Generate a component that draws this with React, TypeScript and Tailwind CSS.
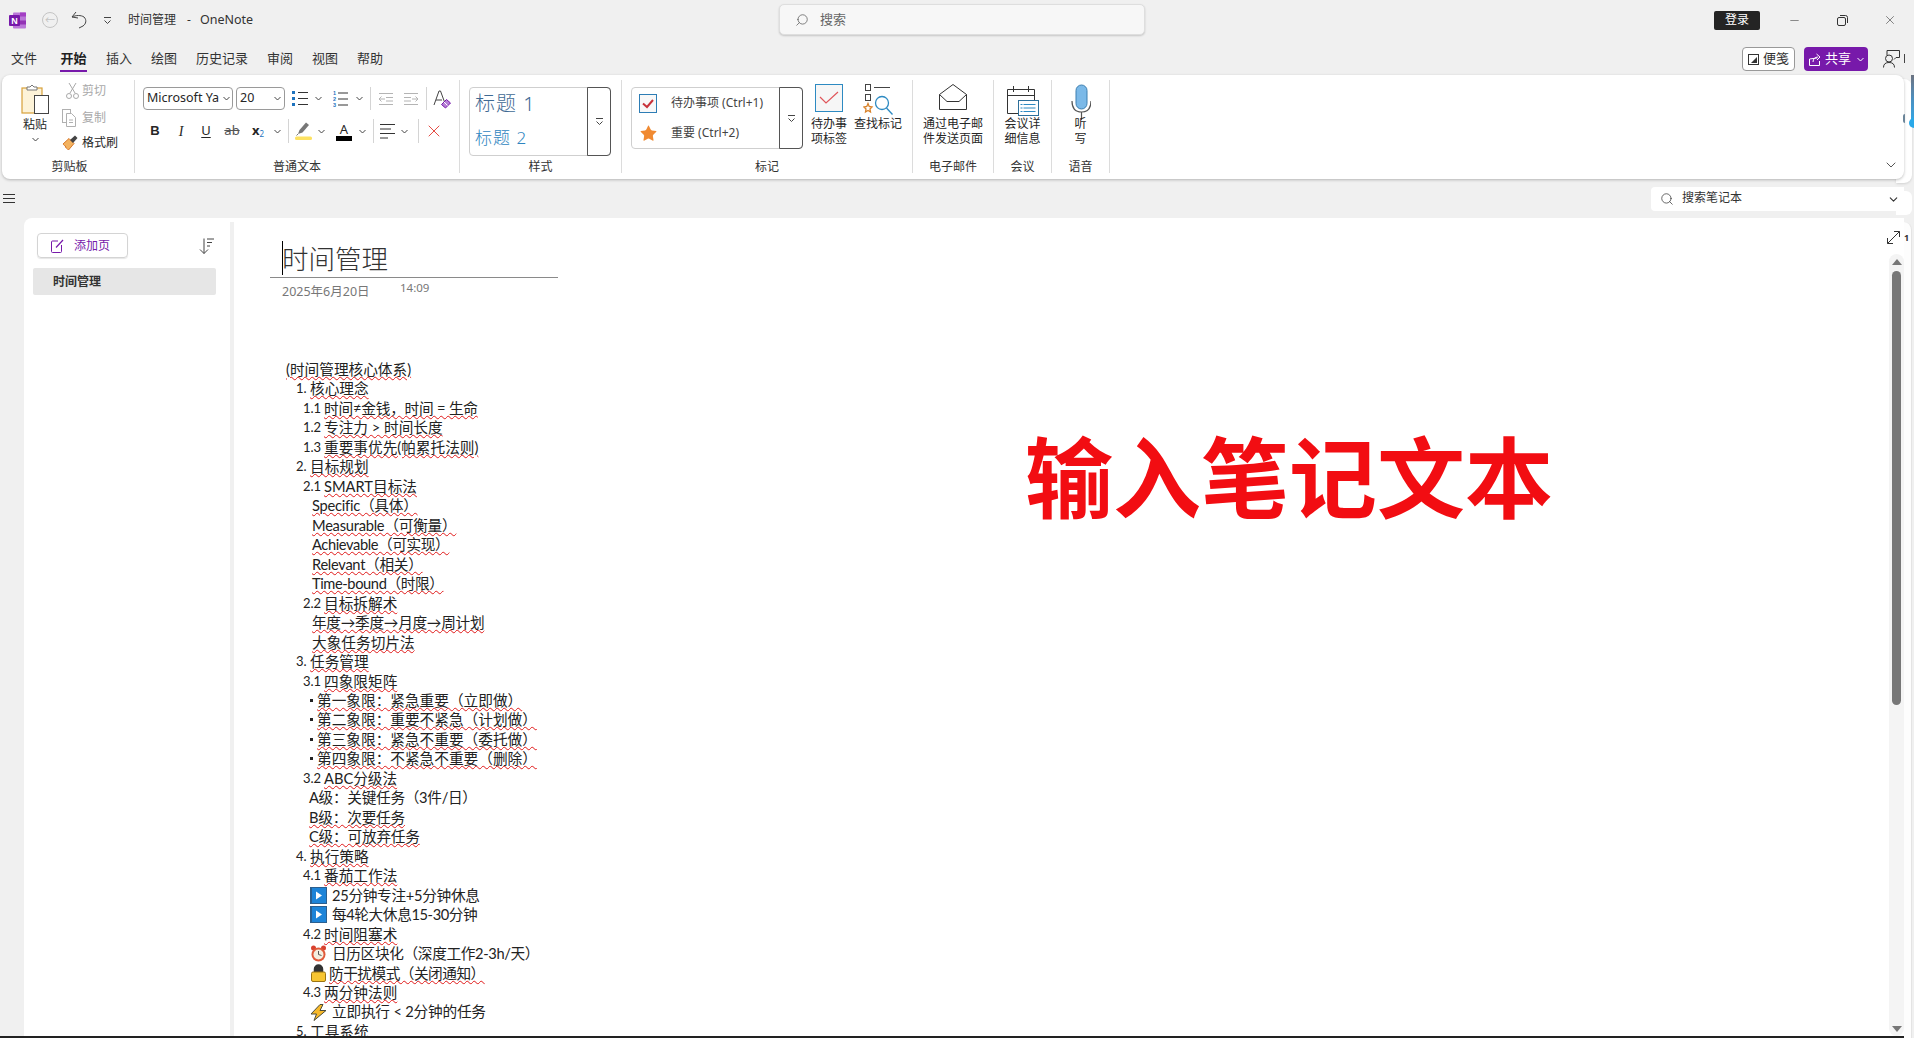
import { ChevronDown, Search, Star, X, Minus } from "lucide-react";

const Chev = ({ className = "" }: { className?: string }) => (
  <svg width="7" height="5" viewBox="0 0 7 5" className={className}>
    <path d="M.5 1 3.5 4 6.5 1" fill="none" stroke="#444" strokeWidth="1" />
  </svg>
);

const MoreDrop = () => (
  <svg width="9" height="9" viewBox="0 0 9 9">
    <path d="M1 1.5h7" stroke="#444" />
    <path d="M1.5 4.5 4.5 7.5 7.5 4.5" fill="none" stroke="#444" />
  </svg>
);

const Sep = ({ className = "" }: { className?: string }) => <div className={`w-px bg-[#d4d4d4] ${className}`} />;

function OneNoteLogo() {
  return (
    <svg width="17" height="17" viewBox="0 0 17 17">
      <rect x="4" y="0.5" width="13" height="16" rx="1" fill="#ba77d8" />
      <rect x="11" y="0.5" width="6" height="4" fill="#a33fc4" />
      <rect x="11" y="8.5" width="6" height="4" fill="#9333b5" />
      <rect x="0" y="3" width="11" height="11" rx="1" fill="#7719aa" />
      <text x="5.5" y="12" textAnchor="middle" fontSize="9" fontWeight="700" fill="#fff" fontFamily="Liberation Sans">
        N
      </text>
    </svg>
  );
}

function PasteIcon() {
  return (
    <svg width="28" height="30" viewBox="0 0 28 30">
      <rect x="1" y="4" width="20" height="25" fill="#fdf3d8" stroke="#d8a13a" strokeWidth="1.2" />
      <path d="M6 6V3h3l2-2 2 2h3v3z" fill="#fff" stroke="#777" />
      <rect x="13.5" y="11.5" width="14" height="18" fill="#fff" stroke="#444" />
    </svg>
  );
}

function ScissorsIcon() {
  return (
    <svg width="13" height="18" viewBox="0 0 13 18" fill="none" stroke="#a9a9a9">
      <path d="M3 1 9 11M10 1 4 11" />
      <circle cx="3" cy="14" r="2.5" />
      <circle cx="10" cy="14" r="2.5" />
    </svg>
  );
}

function CopyIcon() {
  return (
    <svg width="14" height="18" viewBox="0 0 14 18" fill="#fff" stroke="#b0b0b0">
      <rect x=".5" y=".5" width="8" height="13" />
      <path d="M4.5 4.5h5l4 4v9h-9z" />
      <path d="M7 11h4M7 13.5h4" />
    </svg>
  );
}

function BrushIcon() {
  return (
    <svg width="16" height="16" viewBox="0 0 16 16">
      <path d="M1 9 7 3.5l5 5L6.5 15C5 13 3 13 3.5 11 2.500 11 2 10 1 9z" fill="#f3b25f" stroke="#d8782a" />
      <path d="m8 5 5-4.500 2.500 2.500L11 8z" fill="#444" />
    </svg>
  );
}

function BulletsIcon() {
  return (
    <svg width="16" height="17" viewBox="0 0 16 17">
      <rect x="0" y="1" width="3" height="3" fill="#1e73be" />
      <rect x="0" y="7" width="3" height="3" fill="#1e73be" />
      <rect x="0" y="13" width="3" height="3" fill="#1e73be" />
      <path d="M6 2.500h10M6 8.500h10M6 14.500h10" stroke="#333" />
    </svg>
  );
}

function NumberedIcon() {
  return (
    <svg width="15" height="18" viewBox="0 0 15 18">
      <text x="0" y="5" fontSize="5.500" fontWeight="700" fill="#1e73be" fontFamily="Liberation Sans">1</text>
      <text x="0" y="11" fontSize="5.500" fontWeight="700" fill="#1e73be" fontFamily="Liberation Sans">2</text>
      <text x="0" y="17" fontSize="5.500" fontWeight="700" fill="#1e73be" fontFamily="Liberation Sans">3</text>
      <path d="M5 3h10M5 9h10M5 15h10" stroke="#333" />
    </svg>
  );
}

function IndentIcon({ flip }: { flip?: boolean }) {
  return (
    <svg width="15" height="14" viewBox="0 0 15 14" fill="none" stroke="#b4b4b4" className={flip ? "-scale-x-100" : ""}>
      <path d="M1 1.500h14M8 5.500h7M8 9h7M1 12.500h14" />
      <path d="M7 7H1M3.500 4.500 1 7l2.500 2.500" />
    </svg>
  );
}

function ClearFormatIcon() {
  return (
    <svg width="18" height="20" viewBox="0 0 18 20">
      <path d="M1 16 6 2h1.500l4 11" fill="none" stroke="#444" />
      <path d="M3 11h6" stroke="#444" />
      <path d="m8.500 15.500 5-5 4 3.500-5 5z" fill="#b67fd6" stroke="#7719aa" />
      <path d="m11 13 3.500 3.500" stroke="#fff" />
    </svg>
  );
}

function HighlightIcon() {
  return (
    <svg width="17" height="20" viewBox="0 0 17 20">
      <path d="m3 13 1.500-4L11 1.500 14 4l-6.500 7.500z" fill="#777" />
      <path d="M3 13 1.500 14.500" stroke="#777" />
      <rect x="0" y="15.500" width="17" height="3.500" rx="1.500" fill="#fde262" />
    </svg>
  );
}

function AlignIcon() {
  return (
    <svg width="15" height="16" viewBox="0 0 15 16" stroke="#333">
      <path d="M0 1.500h15M0 6h11M0 10.500h15M0 15h8" />
    </svg>
  );
}

function CheckboxIcon() {
  return (
    <svg width="18" height="19" viewBox="0 0 18 19">
      <rect x=".5" y=".5" width="17" height="18" fill="#f8f8f8" stroke="#2d7db5" />
      <path d="M4 9.500 8 13l6-7" fill="none" stroke="#c8323a" strokeWidth="2" />
    </svg>
  );
}

function TodoTagIcon() {
  return (
    <svg width="28" height="28" viewBox="0 0 28 28">
      <rect x=".5" y=".5" width="27" height="27" fill="#f6f6f6" stroke="#2d8ac2" />
      <path d="m5 13 6 6L23 8" fill="none" stroke="#e0555a" strokeWidth="1.200" />
    </svg>
  );
}

function FindTagIcon() {
  return (
    <svg width="30" height="31" viewBox="0 0 30 31">
      <rect x="2.500" y=".5" width="5" height="6" fill="#fff" stroke="#444" />
      <path d="M11 3.500h16" stroke="#444" />
      <rect x="2.500" y="10.500" width="5" height="6" fill="#fff" stroke="#444" />
      <path d="M5 19.500 6.200 22.500 9 23 7 25l.5 3L5 26.500 2.500 28 3 25l-2-2 2.800-.5z" fill="none" stroke="#d8822a" strokeWidth="1.300" />
      <circle cx="19" cy="19" r="6.500" fill="none" stroke="#2d8ac2" strokeWidth="1.300" />
      <path d="m23.500 24 6 6.500" stroke="#2d8ac2" strokeWidth="1.300" />
    </svg>
  );
}

function MailIcon() {
  return (
    <svg width="28" height="26" viewBox="0 0 28 26" fill="none" stroke="#333">
      <path d="M.5 10.500 14 .5l13.500 10v15H.5z" fill="#fff" />
      <path d="M.5 10.500 8 17.500h12l7.500-7" />
      <path d="M8 17.500h12" />
    </svg>
  );
}

function MeetingIcon() {
  return (
    <svg width="32" height="32" viewBox="0 0 32 32" fill="none">
      <path d="M.5 5.500h27M.5 11.500h27M.5 5.500v24h11M27.500 5.500v11M6.500 2v6M21.500 2v6" stroke="#333" />
      <rect x="11.500" y="16.500" width="20" height="15" fill="#fff" stroke="#2d6f9a" />
      <path d="M16.500 20.500h12M16.500 24h12M16.500 27.500h12" stroke="#2d8ac2" />
      <path d="M13.500 20.500h2M13.500 24h2M13.500 27.500h2" stroke="#2d8ac2" />
    </svg>
  );
}

function MicIcon() {
  return (
    <svg width="20" height="36" viewBox="0 0 20 36" fill="none">
      <rect x="5" y="1" width="11" height="24" rx="5.500" fill="#7bb9e8" stroke="#3d7fb0" />
      <path d="M1 17c0 7 3 11 9.500 11S20 24 20 17M10.500 28v8" stroke="#555" strokeWidth="1.200" />
    </svg>
  );
}

function NoteIcon() {
  return (
    <svg width="11" height="11" viewBox="0 0 11 11">
      <rect x=".5" y=".5" width="10" height="10" fill="#fff" stroke="#333" />
      <path d="M3 9l6-6v6z" fill="#333" />
    </svg>
  );
}

function ShareIcon() {
  return (
    <svg width="12" height="13" viewBox="0 0 12 13" fill="none" stroke="#fff">
      <path d="M8 5 .5 6v6.500h10V8" />
      <path d="M4 9c0-3 2-5 5-5M7.500 1 11 4 8 7" />
    </svg>
  );
}

function CommentIcon() {
  return (
    <svg width="17" height="18" viewBox="0 0 17 18" fill="none" stroke="#333">
      <circle cx="6" cy="8.500" r="3.500" />
      <path d="M.5 17.500c0-3.500 2-5 5.500-5s5.500 1.500 5.500 5M4 5V.5h12.500v7H13l-2 2" />
    </svg>
  );
}

function AddPageIcon() {
  return (
    <svg width="13" height="14" viewBox="0 0 13 14" fill="none" stroke="#7719aa">
      <path d="M7 2H1.500A1 1 0 0 0 .5 3v9.500a1 1 0 0 0 1 1h8a1 1 0 0 0 1-1V6" />
      <path d="M5 8.500 12 1" strokeWidth="1.200" />
    </svg>
  );
}

function SortIcon() {
  return (
    <svg width="15" height="16" viewBox="0 0 15 16" fill="none" stroke="#444">
      <path d="M5 .5v15M1 11.500l4 4 4-4M8 1h7M8 4.500h5M8 8h3" />
    </svg>
  );
}

function ExpandIcon() {
  return (
    <svg width="13" height="13" viewBox="0 0 13 13" fill="none" stroke="#333">
      <path d="M.5 12.500 12.500 .5M7 .5h5.500V6M.5 7v5.500H6" />
    </svg>
  );
}

function PlayIcon() {
  return (
    <svg width="17" height="17" viewBox="0 0 17 17">
      <rect width="17" height="17" fill="#2b5f8f" />
      <rect x="2" y="1" width="14" height="15" fill="#1d84d8" />
      <path d="M6 4.500 12 8.500 6 12.500z" fill="#fff" />
    </svg>
  );
}

function ClockIcon() {
  return (
    <svg width="17" height="17" viewBox="0 0 17 17">
      <circle cx="3.500" cy="3" r="2.500" fill="#d8412f" />
      <circle cx="13.500" cy="3" r="2.500" fill="#d8412f" />
      <circle cx="8.500" cy="9.500" r="7" fill="#e05a3a" />
      <circle cx="8.500" cy="9.500" r="5" fill="#f4eedf" />
      <path d="M8.500 6v3.500l3 1" fill="none" stroke="#555" />
    </svg>
  );
}

function LockIcon() {
  return (
    <svg width="15" height="18" viewBox="0 0 15 18">
      <path d="M3.500 8V5a4 4 0 0 1 8 0v3" fill="#333" stroke="#333" strokeWidth="1.500" />
      <rect x=".5" y="8" width="14" height="9.500" rx="1.500" fill="#f7c531" stroke="#9a7414" />
    </svg>
  );
}

function BoltIcon() {
  return (
    <svg width="17" height="17" viewBox="0 0 17 17">
      <path d="M10 .5 1 10h5.500L4 16.500 16 6.500h-6L13 .5z" fill="#f7b92a" stroke="#4b4b3a" />
    </svg>
  );
}

const Wavy = ({ children }: { children: string }) => (
  <span className="underline decoration-wavy decoration-[#e01818] decoration-1 underline-offset-[1px]">{children}</span>
);

type Line = { pad: string; pre?: string; text?: string; plain?: string; icon?: React.ReactNode; tight?: boolean; dot?: boolean };

const lines: Line[] = [
  { pad: "pl-[3px]", text: "(时间管理核心体系)" },
  { pad: "pl-[13px]", pre: "1. ", text: "核心理念" },
  { pad: "pl-[20px] tracking-[-0.2px]", pre: "1.1 ", text: "时间≠金钱，时间 = 生命" },
  { pad: "pl-[20px]", pre: "1.2 ", text: "专注力 > 时间长度" },
  { pad: "pl-[20px]", pre: "1.3 ", text: "重要事优先(帕累托法则)" },
  { pad: "pl-[13px]", pre: "2. ", text: "目标规划" },
  { pad: "pl-[20px]", pre: "2.1 ", text: "SMART目标法" },
  { pad: "pl-[29px] tracking-[-0.25px]", text: "Specific（具体）" },
  { pad: "pl-[29px] tracking-[-0.25px]", text: "Measurable（可衡量）" },
  { pad: "pl-[29px] tracking-[-0.4px]", text: "Achievable（可实现）" },
  { pad: "pl-[29px] tracking-[-0.3px]", text: "Relevant（相关）" },
  { pad: "pl-[29px] tracking-[-0.4px]", text: "Time-bound（时限）" },
  { pad: "pl-[20px]", pre: "2.2 ", text: "目标拆解术" },
  { pad: "pl-[29px] tracking-[-0.3px]", text: "年度→季度→月度→周计划" },
  { pad: "pl-[29px]", text: "大象任务切片法" },
  { pad: "pl-[13px]", pre: "3. ", text: "任务管理" },
  { pad: "pl-[20px]", pre: "3.1 ", text: "四象限矩阵" },
  { pad: "pl-[26px]", dot: true, text: "第一象限：紧急重要（立即做）" },
  { pad: "pl-[26px]", dot: true, text: "第二象限：重要不紧急（计划做）" },
  { pad: "pl-[26px]", dot: true, text: "第三象限：紧急不重要（委托做）" },
  { pad: "pl-[26px]", dot: true, text: "第四象限：不紧急不重要（删除）" },
  { pad: "pl-[20px]", pre: "3.2 ", text: "ABC分级法" },
  { pad: "pl-[26px] tracking-[-0.3px]", plain: "A级：关键任务（3件/日）" },
  { pad: "pl-[26px] tracking-[-0.2px]", text: "B级：次要任务" },
  { pad: "pl-[26px] tracking-[-0.2px]", text: "C级：可放弃任务" },
  { pad: "pl-[13px]", pre: "4. ", text: "执行策略" },
  { pad: "pl-[20px]", pre: "4.1 ", text: "番茄工作法" },
  { pad: "pl-[27px] tracking-[-0.3px]", icon: <PlayIcon />, plain: "25分钟专注+5分钟休息" },
  { pad: "pl-[27px] tracking-[-0.4px]", icon: <PlayIcon />, plain: "每4轮大休息15-30分钟" },
  { pad: "pl-[20px]", pre: "4.2 ", text: "时间阻塞术" },
  { pad: "pl-[27px] tracking-[-0.35px]", icon: <ClockIcon />, plain: "日历区块化（深度工作2-3h/天）" },
  { pad: "pl-[27px] tracking-[-0.5px]", icon: <LockIcon />, tight: true, text: "防干扰模式（关闭通知）" },
  { pad: "pl-[20px]", pre: "4.3 ", text: "两分钟法则" },
  { pad: "pl-[27px] tracking-[-0.2px]", icon: <BoltIcon />, plain: "立即执行 < 2分钟的任务" },
  { pad: "pl-[13px]", pre: "5. ", text: "工具系统" },
];

const tabs = ["插入", "绘图", "历史记录", "审阅", "视图", "帮助"];

function RibbonLabel({ children }: { children: string }) {
  return <div className="text-center text-[12px] leading-[12px] text-[#333]">{children}</div>;
}

function BigButton({ icon, text }: { icon: React.ReactNode; text: string[] }) {
  return (
    <div className="flex flex-col items-center pt-[4px]">
      <div className="flex h-[32px] items-start justify-center">{icon}</div>
      {text.map((t) => (
        <div key={t} className="whitespace-nowrap text-[12px] leading-[15px] text-[#262626]">
          {t}
        </div>
      ))}
    </div>
  );
}

export default function App() {
  return (
    <div className="relative isolate flex h-[1038px] w-[1914px] flex-col overflow-hidden bg-[#f0f0f0] font-['Noto_Sans','Noto_Sans_CJK_SC',sans-serif] text-[#262626]">
      {/* stale window layer that peeks out on the right of the capture */}
      <div className="absolute left-[1896px] top-[79px] -z-10 h-[104px] w-[16px] rounded-r-lg bg-white shadow-sm" />
      <div className="absolute left-[1896px] top-[191px] -z-10 h-[24px] w-[16px] rounded-r-md bg-white" />
      <div className="absolute left-[1896px] top-[222px] -z-10 h-[816px] w-[16px] rounded-tr-lg border-r border-[#e4e4e4] bg-[#fdfdfd]" />
      <div className="absolute left-[1911px] top-[75px] h-[48px] w-[3px] bg-gradient-to-b from-[#6b7280] via-[#4a8fc0] to-[#2aa8e8]" />
      <div className="absolute left-[1909px] top-[118px] h-[10px] w-[10px] rounded-full bg-[#2aa8e8]" />
      <div className="absolute left-[1903px] top-[114px] h-[9px] w-[2px] rounded-l-full bg-[#6b8599]" />

      {/* title bar */}
      <div className="flex h-[40px] shrink-0 items-center">
        <div className="flex w-[779px] items-center pl-[9px]">
          <OneNoteLogo />
          <div className="ml-[16px] flex h-[16px] w-[16px] items-center justify-center rounded-full border border-[#c4c4c4] text-[10px] leading-none text-[#c4c4c4]">
            ←
          </div>
          <svg width="17" height="18" viewBox="0 0 17 18" fill="none" stroke="#444" className="ml-[13px]">
            <path d="M5 1 1 6l6 1" />
            <path d="M1 6c4-2 9-2 12 0 3 3 2 7-1 9l-4 2" />
          </svg>
          <div className="ml-[15px]">
            <MoreDrop />
          </div>
          <span className="ml-[16px] mt-[-1px] whitespace-pre text-[12px] leading-[16px] text-[#333]">时间管理</span>
          <span className="ml-[11px] mt-[-1px] text-[12px] leading-[16px] text-[#333]">-</span>
          <span className="ml-[9px] mt-[-1px] text-[12.500px] leading-[16px] text-[#333]">OneNote</span>
        </div>
        <div className="mt-[-1px] flex h-[31px] w-[366px] items-center rounded-[5px] border border-[#dedede] bg-[#f7f7f7] pl-[15px] shadow-[0_1px_2px_rgba(0,0,0,0.18)]">
          <Search size={14} strokeWidth={1.25} className="-scale-x-100 text-[#555]" />
          <span className="ml-[11px] mt-[-2px] text-[13px] leading-[16px] text-[#666]">搜索</span>
        </div>
        <div className="flex flex-1 items-center justify-end pr-[17px]">
          <div className="flex h-[19px] w-[46px] items-center justify-center rounded-[2px] bg-[#242424] text-[12px] leading-[16px] text-white">
            登录
          </div>
          <Minus size={13} strokeWidth={1} className="ml-[28px] text-[#333]" />
          <svg width="11" height="11" viewBox="0 0 11 11" fill="none" stroke="#333" className="ml-[36px]">
            <rect x=".5" y="2.500" width="8" height="8" rx="1.500" />
            <path d="M3 .5h5.500a2 2 0 0 1 2 2V8" />
          </svg>
          <X size={14} strokeWidth={1} className="ml-[35px] text-[#333]" />
        </div>
      </div>

      {/* tabs */}
      <div className="flex h-[35px] shrink-0 items-start pl-[11px] text-[13px] leading-[18px]">
        <span className="mt-[9px] w-[26px] text-[#333]">文件</span>
        <div className="ml-[23px] flex h-[32px] w-[27px] flex-col items-center pt-[9px]">
          <span className="font-bold text-[#1f1f1f]">开始</span>
          <div className="mt-[3px] h-[2px] w-full bg-[#7719aa]" />
        </div>
        <div className="ml-[19px] mt-[9px] flex gap-[19px] text-[#333]">
          {tabs.map((t) => (
            <span key={t}>{t}</span>
          ))}
        </div>
        <div className="ml-auto mr-[14px] mt-[7px] flex items-center">
          <div className="flex h-[24px] w-[53px] items-center rounded-[4px] border border-[#999] bg-white pl-[5px]">
            <NoteIcon />
            <span className="ml-[4px] mt-[-2px] text-[13px] leading-[16px] text-[#333]">便笺</span>
          </div>
          <div className="ml-[9px] flex h-[24px] w-[64px] items-center rounded-[4px] bg-[#7719aa] pl-[5px] text-white">
            <ShareIcon />
            <span className="ml-[4px] mt-[-2px] text-[13px] leading-[16px]">共享</span>
            <svg width="7" height="5" viewBox="0 0 7 5" className="ml-[6px]">
              <path d="M.5 1 3.500 4 6.500 1" fill="none" stroke="#fff" />
            </svg>
          </div>
          <div className="ml-[15px]">
            <CommentIcon />
          </div>
        </div>
      </div>
      <div className="absolute left-[1904px] top-[54px] h-[9px] w-px bg-[#444]" />

      {/* ribbon */}
      <div className="ml-[2px] mr-[10px] flex h-[104px] shrink-0 rounded-lg bg-white pb-[6px] pt-[5px] shadow-[0_1px_3px_rgba(0,0,0,0.25)]">
        <div className="flex w-[133px] flex-col border-r border-[#dcdcdc]">
          <div className="flex flex-1">
            <div className="ml-[15px] flex w-[36px] flex-col items-center pt-[4px]">
              <PasteIcon />
              <span className="mt-[3px] text-[12px] leading-[16px]">粘贴</span>
              <Chev className="mt-[4px]" />
            </div>
            <div className="ml-[9px] flex flex-col pt-[1px] text-[12px] leading-[16px]">
              <div className="flex h-[20px] items-center text-[#a9a9a9]">
                <span className="flex w-[20px] justify-center"><ScissorsIcon /></span>
                <span>剪切</span>
              </div>
              <div className="mt-[7px] flex h-[20px] items-center text-[#a9a9a9]">
                <span className="flex w-[20px] justify-start"><CopyIcon /></span>
                <span>复制</span>
              </div>
              <div className="mt-[5px] flex h-[20px] items-center">
                <span className="flex w-[20px] justify-start"><BrushIcon /></span>
                <span>格式刷</span>
              </div>
            </div>
          </div>
          <div className="pl-[3px]">
            <RibbonLabel>剪贴板</RibbonLabel>
          </div>
        </div>

        <div className="flex w-[325px] flex-col border-r border-[#dcdcdc]">
          <div className="flex-1 pt-[7px]">
            <div className="flex h-[23px] items-center">
              <div className="ml-[8px] flex h-[23px] w-[90px] items-center rounded-[4px] border border-[#9a9a9a] pl-[3px] text-[12.500px] leading-[16px]">
                <span className="mt-[-1px] whitespace-nowrap">Microsoft Ya</span>
                <Chev className="ml-auto mr-[2px]" />
              </div>
              <div className="ml-[3px] flex h-[23px] w-[49px] items-center rounded-[4px] border border-[#9a9a9a] pl-[3px] text-[12.500px] leading-[16px]">
                <span className="mt-[-1px]">20</span>
                <Chev className="ml-auto mr-[3px]" />
              </div>
              <div className="ml-[7px]"><BulletsIcon /></div>
              <Chev className="ml-[7px]" />
              <div className="ml-[11px]"><NumberedIcon /></div>
              <Chev className="ml-[8px]" />
              <Sep className="ml-[7px] h-[23px]" />
              <div className="ml-[7px]"><IndentIcon /></div>
              <div className="ml-[11px]"><IndentIcon flip /></div>
              <Sep className="ml-[7px] h-[23px]" />
              <div className="ml-[6px]"><ClearFormatIcon /></div>
            </div>
            <div className="mt-[9px] flex h-[24px] items-center">
              <span className="ml-[10px] w-[20px] text-center font-['Liberation_Sans',sans-serif] text-[13px] font-bold">B</span>
              <span className="ml-[6px] w-[20px] text-center font-['Liberation_Serif',serif] text-[14px] italic">I</span>
              <span className="ml-[5px] w-[20px] text-center text-[13px] underline underline-offset-2">U</span>
              <span className="ml-[6px] w-[20px] text-center text-[13px] text-[#555] line-through">ab</span>
              <span className="ml-[6px] w-[20px] text-center text-[13px] font-bold">
                x<sub className="text-[8px] font-normal text-[#1e73be]">2</sub>
              </span>
              <Chev className="ml-[6px]" />
              <Sep className="ml-[7px] h-[24px]" />
              <div className="ml-[6px]"><HighlightIcon /></div>
              <Chev className="ml-[6px]" />
              <div className="ml-[11px] flex w-[16px] flex-col items-center text-[13px] leading-[14px]">
                <span>A</span>
                <div className="h-[5px] w-full bg-black" />
              </div>
              <Chev className="ml-[7px]" />
              <Sep className="ml-[7px] h-[24px]" />
              <div className="ml-[6px]"><AlignIcon /></div>
              <Chev className="ml-[6px]" />
              <Sep className="ml-[10px] h-[24px]" />
              <X size={20} strokeWidth={1.1} className="ml-[5px] text-[#e23b32]" />
            </div>
          </div>
          <RibbonLabel>普通文本</RibbonLabel>
        </div>

        <div className="flex w-[162px] flex-col border-r border-[#dcdcdc]">
          <div className="flex-1 pt-[7px]">
            <div className="ml-[9px] flex h-[69px] w-[142px] rounded-[4px] border border-[#cfcfcf]">
              <div className="flex flex-1 flex-col pl-[5px] pt-[1px]">
                <span className="h-[35px] text-[20px] font-light leading-[30px] tracking-[1px] text-[#3f6a94]">标题 1</span>
                <span className="text-[17px] font-light leading-[28px] tracking-[1px] text-[#2e85c0]">标题 2</span>
              </div>
              <div className="my-[-1px] mr-[-1px] flex w-[24px] items-center justify-center rounded-r-[4px] border border-[#555]">
                <MoreDrop />
              </div>
            </div>
          </div>
          <RibbonLabel>样式</RibbonLabel>
        </div>

        <div className="flex w-[291px] flex-col border-r border-[#dcdcdc]">
          <div className="flex flex-1 pt-[0px]">
            <div className="ml-[9px] mt-[7px] flex h-[62px] w-[172px] rounded-[4px] border border-[#cfcfcf]">
              <div className="flex flex-1 flex-col justify-center gap-[11px] pl-[7px] text-[12px] leading-[19px] text-[#444]">
                <div className="flex items-center">
                  <CheckboxIcon />
                  <span className="ml-[14px] mt-[-2px] whitespace-nowrap">待办事项 (Ctrl+1)</span>
                </div>
                <div className="flex items-center">
                  <Star size={19} fill="#f08a32" strokeWidth={0} />
                  <span className="ml-[13px] mt-[-2px] whitespace-nowrap">重要 (Ctrl+2)</span>
                </div>
              </div>
              <div className="my-[-1px] mr-[-1px] flex w-[24px] items-center justify-center rounded-r-[4px] border border-[#555]">
                <MoreDrop />
              </div>
            </div>
            <div className="ml-[2px] w-[48px]">
              <BigButton icon={<TodoTagIcon />} text={["待办事", "项标签"]} />
            </div>
            <div className="ml-[1px] w-[48px]">
              <BigButton icon={<FindTagIcon />} text={["查找标记"]} />
            </div>
          </div>
          <RibbonLabel>标记</RibbonLabel>
        </div>

        <div className="flex w-[81px] flex-col border-r border-[#dcdcdc]">
          <div className="flex-1">
            <BigButton icon={<MailIcon />} text={["通过电子邮", "件发送页面"]} />
          </div>
          <RibbonLabel>电子邮件</RibbonLabel>
        </div>

        <div className="flex w-[58px] flex-col border-r border-[#dcdcdc]">
          <div className="flex-1">
            <BigButton icon={<MeetingIcon />} text={["会议详", "细信息"]} />
          </div>
          <RibbonLabel>会议</RibbonLabel>
        </div>

        <div className="flex w-[58px] flex-col border-r border-[#dcdcdc]">
          <div className="flex-1">
            <BigButton icon={<MicIcon />} text={["听", "写"]} />
          </div>
          <RibbonLabel>语音</RibbonLabel>
        </div>

        <ChevronDown size={16} strokeWidth={1.25} className="ml-auto mr-[5px] self-end text-[#333]" />
      </div>

      {/* notebook bar */}
      <div className="flex h-[39px] shrink-0 items-start justify-between pr-[10px] pt-[8px]">
        <div className="ml-[3px] mt-[7px] flex w-[12px] flex-col gap-[3px]">
          <div className="h-px bg-[#333]" />
          <div className="h-px bg-[#333]" />
          <div className="h-px bg-[#333]" />
        </div>
        <div className="flex h-[24px] w-[253px] items-center rounded-l-[4px] bg-white pl-[9px]">
          <Search size={14} strokeWidth={1.25} className="text-[#333]" />
          <span className="ml-[8px] mt-[-2px] text-[12px] leading-[16px] text-[#333]">搜索笔记本</span>
          <ChevronDown size={13} strokeWidth={2} className="ml-auto mr-[4px] text-[#333]" />
        </div>
      </div>

      {/* page list + note */}
      <div className="mr-[10px] flex min-h-0 flex-1 border-b-2 border-[#222] pl-[24px]">
        <div className="flex flex-1 overflow-hidden rounded-tl-lg bg-white">
          <div className="w-[206px] shrink-0 pt-[15px]">
            <div className="flex items-center">
              <div className="ml-[13px] flex h-[25px] w-[91px] items-center rounded-[4px] border border-[#d4d4d4] pl-[13px] shadow-[0_1px_1px_rgba(0,0,0,0.1)]">
                <AddPageIcon />
                <span className="ml-[10px] text-[12px] leading-[16px] text-[#7719aa]">添加页</span>
              </div>
              <div className="ml-[71px]"><SortIcon /></div>
            </div>
            <div className="ml-[9px] mt-[10px] flex h-[27px] w-[183px] items-center rounded-[2px] bg-[#e6e6e6] pl-[20px] text-[12px] font-bold leading-[16px] text-[#333]">
              时间管理
            </div>
          </div>
          <div className="mt-[4px] w-[4px] shrink-0 bg-[#f0f0f0]" />

          <div className="relative flex min-w-0 flex-1">
            <div className="min-w-0 flex-1 pt-[20px]">
              <div className="relative ml-[36px] h-[40px] w-[288px] border-b border-[#8a8a8a] pl-[12px] text-[26.500px] font-light leading-[42px] text-[#333]">
                <div className="absolute left-[12px] top-[3px] h-[34px] w-px bg-black" />
                时间管理
              </div>
              <div className="ml-[48px] mt-[6px] flex text-[#777]">
                <span className="w-[118px] text-[12.500px] leading-[16px]">2025年6月20日</span>
                <span className="mt-[-4px] text-[11.500px] leading-[16px]">14:09</span>
              </div>
              <div className="ml-[49px] mt-[60px] font-['Lato','Noto_Sans_CJK_SC',sans-serif] text-[14.670px] leading-[19.480px] text-[#222] [text-spacing-trim:space-all]">
                {lines.map((l, i) => (
                  <div key={i} className={`flex h-[19.480px] items-center whitespace-pre ${l.pad}`}>
                    {l.icon && (
                      <span className={`flex shrink-0 ${l.tight ? "mr-[2px] w-[17px]" : "mr-[5px] w-[17px]"} justify-center`}>
                        {l.icon}
                      </span>
                    )}
                    {l.dot && <span className="mb-[1px] ml-[1px] mr-[4px] h-[3px] w-[3px] shrink-0 bg-[#222]" />}
                    {l.pre && (
                      <span className={`shrink-0 text-[13px] tracking-normal ${l.pre.length > 3 ? "w-[21px]" : "w-[14px]"}`}>
                        {l.pre}
                      </span>
                    )}
                    {l.text && <Wavy>{l.text}</Wavy>}
                    {l.plain && <span>{l.plain}</span>}
                  </div>
                ))}
              </div>
            </div>

            <div className="flex w-[17px] shrink-0 flex-col pt-[13px]">
              <ExpandIcon />
              <div className="ml-[2px] mt-[10px] flex w-[15px] flex-1 flex-col items-center rounded-full bg-[#f4f4f4] pb-[4px] pt-[5px]">
                <div className="h-0 w-0 border-x-[5px] border-b-[6px] border-x-transparent border-b-[#777]" />
                <div className="mt-[6px] h-[434px] w-[9px] rounded-full bg-[#777]" />
                <div className="mt-auto h-0 w-0 border-x-[5px] border-t-[6px] border-x-transparent border-t-[#777]" />
              </div>
            </div>

            {/* callout pasted over the capture */}
            <div className="absolute left-[791px] top-[209px] whitespace-nowrap text-[88px] font-bold leading-[100px] text-[#f20d12]">
              输入笔记文本
            </div>
          </div>
        </div>
      </div>
      <div className="absolute left-[1904px] top-[232px] text-[9px] font-bold leading-[12px] text-[#333]">1</div>
    </div>
  );
}
